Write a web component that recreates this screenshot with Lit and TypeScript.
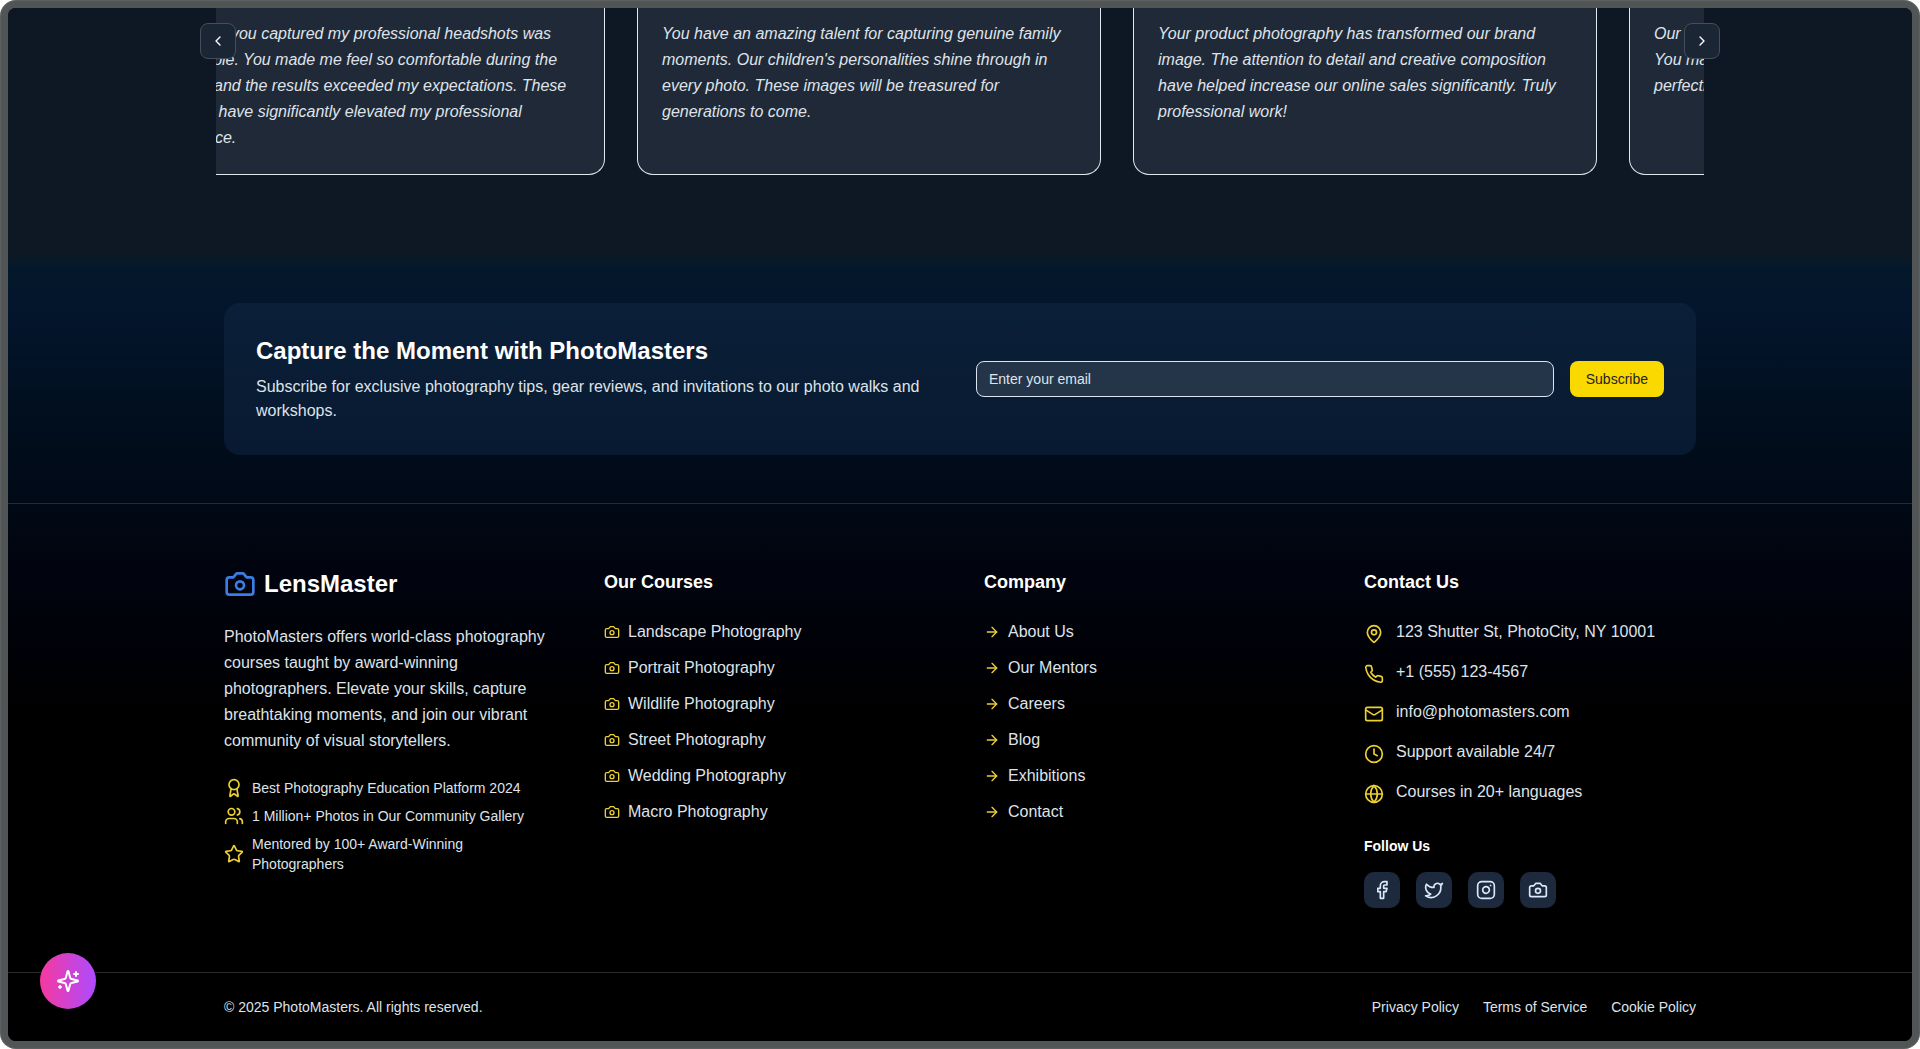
import { LitElement, html, css, svg } from "lit";
import { customElement, property } from "lit/decorators.js";

const ICONS: Record<string, unknown> = {
  camera: svg`<path d="M14.5 4h-5L7 7H4a2 2 0 0 0-2 2v9a2 2 0 0 0 2 2h16a2 2 0 0 0 2-2V9a2 2 0 0 0-2-2h-3l-2.5-3z"/><circle cx="12" cy="13" r="3"/>`,
  award: svg`<path d="m15.477 12.89 1.515 8.526a.5.5 0 0 1-.81.47l-3.58-2.687a1 1 0 0 0-1.197 0l-3.586 2.686a.5.5 0 0 1-.81-.469l1.514-8.526"/><circle cx="12" cy="8" r="6"/>`,
  users: svg`<path d="M16 21v-2a4 4 0 0 0-4-4H6a4 4 0 0 0-4 4v2"/><circle cx="9" cy="7" r="4"/><path d="M22 21v-2a4 4 0 0 0-3-3.87"/><path d="M16 3.13a4 4 0 0 1 0 7.75"/>`,
  star: svg`<path d="M11.525 2.295a.53.53 0 0 1 .95 0l2.31 4.679a2.123 2.123 0 0 0 1.595 1.16l5.166.756a.53.53 0 0 1 .294.904l-3.736 3.638a2.123 2.123 0 0 0-.611 1.878l.882 5.14a.53.53 0 0 1-.771.56l-4.618-2.428a2.122 2.122 0 0 0-1.973 0L6.396 21.01a.53.53 0 0 1-.77-.56l.881-5.139a2.122 2.122 0 0 0-.611-1.879L2.16 9.795a.53.53 0 0 1 .294-.906l5.165-.755a2.122 2.122 0 0 0 1.597-1.16z"/>`,
  arrow: svg`<path d="M5 12h14"/><path d="m12 5 7 7-7 7"/>`,
  pin: svg`<path d="M20 10c0 4.993-5.539 10.193-7.399 11.799a1 1 0 0 1-1.202 0C9.539 20.193 4 14.993 4 10a8 8 0 0 1 16 0"/><circle cx="12" cy="10" r="3"/>`,
  phone: svg`<path d="M22 16.92v3a2 2 0 0 1-2.18 2 19.79 19.79 0 0 1-8.63-3.07 19.5 19.5 0 0 1-6-6 19.79 19.79 0 0 1-3.07-8.67A2 2 0 0 1 4.11 2h3a2 2 0 0 1 2 1.72 12.84 12.84 0 0 0 .7 2.81 2 2 0 0 1-.45 2.11L8.09 9.91a16 16 0 0 0 6 6l1.27-1.27a2 2 0 0 1 2.11-.45 12.84 12.84 0 0 0 2.81.7A2 2 0 0 1 22 16.92z"/>`,
  mail: svg`<rect width="20" height="16" x="2" y="4" rx="2"/><path d="m22 7-8.97 5.7a1.94 1.94 0 0 1-2.06 0L2 7"/>`,
  clock: svg`<circle cx="12" cy="12" r="10"/><path d="M12 6v6l4 2"/>`,
  globe: svg`<circle cx="12" cy="12" r="10"/><path d="M12 2a14.5 14.5 0 0 0 0 20 14.5 14.5 0 0 0 0-20"/><path d="M2 12h20"/>`,
  facebook: svg`<path d="M18 2h-3a5 5 0 0 0-5 5v3H7v4h3v8h4v-8h3l1-4h-4V7a1 1 0 0 1 1-1h3z"/>`,
  twitter: svg`<path d="M22 4s-.7 2.1-2 3.4c1.6 10-9.4 17.3-18 11.6 2.2.1 4.4-.6 6-2C3 15.5.5 9.6 3 5c2.2 2.6 5.6 4.1 9 4-.9-4.2 4-6.6 7-3.8 1.1 0 3-1.2 3-1.2z"/>`,
  instagram: svg`<rect width="20" height="20" x="2" y="2" rx="5"/><path d="M16 11.37A4 4 0 1 1 12.63 8 4 4 0 0 1 16 11.37z"/><path d="M17.5 6.5h.01"/>`,
  left: svg`<path d="m15 18-6-6 6-6"/>`,
  right: svg`<path d="m9 18 6-6-6-6"/>`,
  sparkles: svg`<path d="M9.937 15.5A2 2 0 0 0 8.5 14.063l-6.135-1.582a.5.5 0 0 1 0-.962L8.5 9.936A2 2 0 0 0 9.937 8.5l1.582-6.135a.5.5 0 0 1 .963 0L14.063 8.5A2 2 0 0 0 15.5 9.937l6.135 1.581a.5.5 0 0 1 0 .964L15.5 14.063a2 2 0 0 0-1.437 1.437l-1.582 6.135a.5.5 0 0 1-.963 0z"/><path d="M20 3v4"/><path d="M22 5h-4"/><path d="M4 17v2"/><path d="M5 18H3"/>`,
};

@customElement("line-icon")
export class LineIcon extends LitElement {
  @property() name = "camera";

  static styles = css`
    :host {
      display: block;
      flex: none;
      width: 20px;
      height: 20px;
    }
    svg {
      display: block;
      width: 100%;
      height: 100%;
      fill: none;
      stroke: currentColor;
      stroke-width: 2;
      stroke-linecap: round;
      stroke-linejoin: round;
    }
  `;

  render() {
    return html`<svg viewBox="0 0 24 24" aria-hidden="true">${ICONS[this.name]}</svg>`;
  }
}

const QUOTES = [
  "The way you captured my professional headshots was incredible. You made me feel so comfortable during the shoot, and the results exceeded my expectations. These photos have significantly elevated my professional presence.",
  "You have an amazing talent for capturing genuine family moments. Our children's personalities shine through in every photo. These images will be treasured for generations to come.",
  "Your product photography has transformed our brand image. The attention to detail and creative composition have helped increase our online sales significantly. Truly professional work!",
  "Our wedding photos turned out absolutely breathtaking. You managed to capture every detail and emotion so perfectly that day.",
];

const BADGES = [
  ["award", "Best Photography Education Platform 2024"],
  ["users", "1 Million+ Photos in Our Community Gallery"],
  ["star", "Mentored by 100+ Award-Winning Photographers"],
];

const COURSES = ["Landscape", "Portrait", "Wildlife", "Street", "Wedding", "Macro"].map((c) => `${c} Photography`);
const COMPANY = ["About Us", "Our Mentors", "Careers", "Blog", "Exhibitions", "Contact"];

const CONTACT = [
  ["pin", "123 Shutter St, PhotoCity, NY 10001"],
  ["phone", "+1 (555) 123-4567"],
  ["mail", "info@photomasters.com"],
  ["clock", "Support available 24/7"],
  ["globe", "Courses in 20+ languages"],
];

const SOCIAL = [
  ["facebook", "Facebook"],
  ["twitter", "Twitter"],
  ["instagram", "Instagram"],
  ["camera", "Gallery"],
];

const LEGAL = ["Privacy Policy", "Terms of Service", "Cookie Policy"];

@customElement("app-root")
export class AppRoot extends LitElement {
  static styles = css`
    :host {
      display: block;
      font-family: "Liberation Sans", Arial, sans-serif;
      font-size: 16px;
      line-height: 24px;
      color: #dfe3e9;
    }
    * {
      box-sizing: border-box;
    }
    h2,
    h3,
    h4,
    p,
    ul {
      margin: 0;
      padding: 0;
    }
    ul {
      list-style: none;
    }
    a {
      color: inherit;
      text-decoration: none;
    }
    button {
      font: inherit;
      padding: 0;
      border: 0;
      cursor: pointer;
    }
    .frame {
      min-height: 100vh;
      padding: 8px;
      border-radius: 16px;
      background: #525555;
      box-shadow: inset 0 0 2px #7d8080;
    }
    .screen {
      position: relative;
      overflow: hidden;
      border-radius: 8px;
      background: #000;
    }
    .wrap {
      max-width: 1536px;
      margin: 0 auto;
      padding: 0 32px;
    }
    .testimonials {
      padding-bottom: 80px;
      background: #0e1825;
    }
    .carousel {
      position: relative;
    }
    .viewport {
      margin: 0 -8px;
      overflow: hidden;
    }
    .track {
      display: flex;
      margin-left: -91px;
      margin-right: 91px;
    }
    .slide {
      display: flex;
      flex: 0 0 calc(100% / 3);
      padding: 0 16px;
    }
    .quote {
      flex: 1;
      margin: 0;
      padding: 13px 24px 23px;
      border: 1px solid #e2e8f0;
      border-top: 0;
      border-radius: 0 0 16px 16px;
      background: #1f2937;
      line-height: 26px;
      font-style: italic;
    }
    .nav {
      position: absolute;
      top: 15px;
      display: grid;
      place-items: center;
      width: 36px;
      height: 36px;
      border: 1px solid #434d5b;
      border-radius: 8px;
      background: #1b2635;
      color: #fff;
    }
    .nav line-icon {
      width: 16px;
      height: 16px;
    }
    .prev {
      left: -24px;
    }
    .next {
      right: -24px;
    }
    .lower {
      background: linear-gradient(#0b1826 0, #04182c 14px, #03142a 80px, #010f1f 150px, #010a17 240px, #01040f 310px, #000209 380px, #000 460px);
    }
    .signup {
      padding-top: 48px;
      padding-bottom: 48px;
    }
    .panel {
      display: grid;
      grid-template-columns: 1fr 1fr;
      align-items: center;
      gap: 32px;
      padding: 32px;
      border-radius: 16px;
      background: linear-gradient(#0a1f38, #081a31);
    }
    .title {
      margin-bottom: 8px;
      font-size: 24px;
      line-height: 32px;
      color: #fff;
    }
    .form {
      display: flex;
      gap: 16px;
      font-size: 14px;
      line-height: 20px;
    }
    .email {
      flex: 1;
      min-width: 0;
      height: 36px;
      padding: 0 12px;
      border: 1px solid #dbe4f0;
      border-radius: 8px;
      background: #253549;
      color: #fff;
      font: inherit;
    }
    .email::placeholder {
      color: #dfe4ea;
      opacity: 1;
    }
    .subscribe {
      height: 36px;
      padding: 0 16px;
      border-radius: 8px;
      background: #f9d900;
      color: #1f2125;
    }
    .rule {
      border-top: 1px solid #252b35;
    }
    .rule.dim {
      border-color: #2a2a2a;
    }
    .columns {
      display: grid;
      grid-template-columns: repeat(4, 1fr);
      gap: 48px;
      padding-top: 64px;
      padding-bottom: 64px;
    }
    .brand {
      display: flex;
      align-items: center;
      gap: 8px;
      margin-bottom: 24px;
      font-size: 24px;
      line-height: 32px;
      font-weight: bold;
      color: #fff;
    }
    .brand line-icon {
      width: 32px;
      height: 32px;
      color: #3b7de4;
    }
    .about {
      line-height: 26px;
      margin-bottom: 24px;
    }
    .badges {
      display: grid;
      gap: 8px;
      font-size: 14px;
      line-height: 20px;
    }
    .badge,
    .link {
      display: flex;
      align-items: center;
      gap: 8px;
    }
    .badge line-icon,
    .link line-icon,
    .contact line-icon {
      color: #ecd032;
    }
    .head {
      margin-bottom: 24px;
      font-size: 18px;
      line-height: 28px;
      color: #fff;
    }
    .links {
      display: grid;
      gap: 12px;
    }
    .link line-icon {
      width: 16px;
      height: 16px;
    }
    .contacts {
      display: grid;
      gap: 16px;
      margin-bottom: 32px;
    }
    .contact {
      display: flex;
      align-items: flex-start;
      gap: 12px;
    }
    .contact line-icon {
      margin-top: 4px;
    }
    .follow {
      margin-bottom: 16px;
      font-size: 14px;
      line-height: 20px;
      color: #fff;
    }
    .social {
      display: flex;
      gap: 16px;
    }
    .social a {
      display: grid;
      place-items: center;
      width: 36px;
      height: 36px;
      border-radius: 10px;
      background: #1d293d;
      color: #dbe7fb;
    }
    .bottom {
      display: flex;
      justify-content: space-between;
      padding-top: 24px;
      padding-bottom: 24px;
      font-size: 14px;
      line-height: 20px;
    }
    .legal {
      display: flex;
      gap: 24px;
    }
    .assist {
      position: absolute;
      left: 32px;
      bottom: 32px;
      display: grid;
      place-items: center;
      width: 56px;
      height: 56px;
      border-radius: 50%;
      background: linear-gradient(90deg, #f6399f, #ad4bff);
      color: #fff;
    }
    .assist line-icon {
      width: 24px;
      height: 24px;
    }
  `;

  private links(icon: string, items: string[]) {
    return html`<ul class="links">
      ${items.map((t) => html`<li><a class="link" href="#"><line-icon name=${icon}></line-icon>${t}</a></li>`)}
    </ul>`;
  }

  render() {
    return html`
      <div class="frame">
        <div class="screen">
          <section class="testimonials">
            <div class="wrap">
              <div class="carousel">
                <div class="viewport">
                  <div class="track">
                    ${QUOTES.map((q) => html`<div class="slide"><blockquote class="quote">${q}</blockquote></div>`)}
                  </div>
                </div>
                <button class="nav prev" aria-label="Previous"><line-icon name="left"></line-icon></button>
                <button class="nav next" aria-label="Next"><line-icon name="right"></line-icon></button>
              </div>
            </div>
          </section>
          <footer class="lower">
            <div class="wrap signup">
              <div class="panel">
                <div>
                  <h2 class="title">Capture the Moment with PhotoMasters</h2>
                  <p>Subscribe for exclusive photography tips, gear reviews, and invitations to our photo walks and workshops.</p>
                </div>
                <form class="form" @submit=${(e: Event) => e.preventDefault()}>
                  <input class="email" type="email" aria-label="Email" placeholder="Enter your email" />
                  <button class="subscribe" type="submit">Subscribe</button>
                </form>
              </div>
            </div>
            <div class="rule">
              <div class="wrap columns">
                <div>
                  <div class="brand"><line-icon name="camera"></line-icon>LensMaster</div>
                  <p class="about">
                    PhotoMasters offers world-class photography courses taught by award-winning photographers. Elevate
                    your skills, capture breathtaking moments, and join our vibrant community of visual storytellers.
                  </p>
                  <ul class="badges">
                    ${BADGES.map(([i, t]) => html`<li class="badge"><line-icon name=${i}></line-icon><span>${t}</span></li>`)}
                  </ul>
                </div>
                <div>
                  <h3 class="head">Our Courses</h3>
                  ${this.links("camera", COURSES)}
                </div>
                <div>
                  <h3 class="head">Company</h3>
                  ${this.links("arrow", COMPANY)}
                </div>
                <div>
                  <h3 class="head">Contact Us</h3>
                  <ul class="contacts">
                    ${CONTACT.map(([i, t]) => html`<li class="contact"><line-icon name=${i}></line-icon><span>${t}</span></li>`)}
                  </ul>
                  <h4 class="follow">Follow Us</h4>
                  <div class="social">
                    ${SOCIAL.map(([i, t]) => html`<a href="#" aria-label=${t}><line-icon name=${i}></line-icon></a>`)}
                  </div>
                </div>
              </div>
            </div>
            <div class="rule dim">
              <div class="wrap bottom">
                <p>© 2025 PhotoMasters. All rights reserved.</p>
                <nav class="legal">${LEGAL.map((t) => html`<a href="#">${t}</a>`)}</nav>
              </div>
            </div>
          </footer>
          <button class="assist" aria-label="Assistant"><line-icon name="sparkles"></line-icon></button>
        </div>
      </div>
    `;
  }
}
